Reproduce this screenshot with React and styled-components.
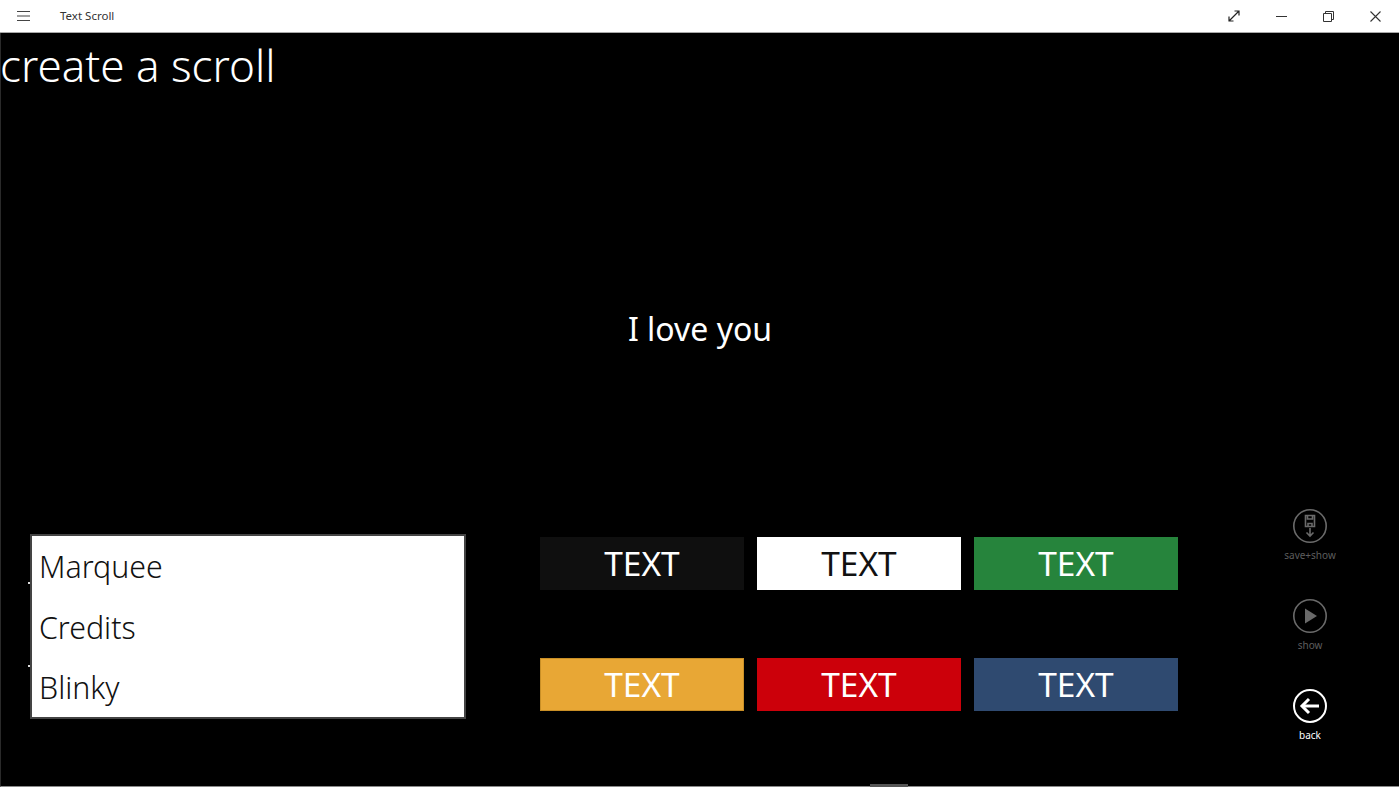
import React from "react";
import styled, { createGlobalStyle } from "styled-components";

const GlobalStyle = createGlobalStyle`
  html, body {
    margin: 0;
    padding: 0;
    height: 100%;
    background: #000;
    overflow: hidden;
  }
  body {
    font-family: "Noto Sans", "Open Sans", "Liberation Sans", sans-serif;
  }
`;

const Page = styled.div`
  position: relative;
  width: 1399px;
  height: 787px;
  display: flex;
  flex-direction: column;
`;

const TitleBar = styled.header`
  height: 32px;
  flex: none;
  display: flex;
  align-items: center;
  background: #fff;
  border-bottom: 1px solid #a9a9a9;
`;

const MenuButton = styled.button`
  width: 47px;
  height: 32px;
  padding: 0;
  border: 0;
  background: none;
  display: flex;
  align-items: center;
  justify-content: center;
`;

const AppName = styled.span`
  margin-left: 13px;
  padding-bottom: 1px;
  font-size: 11.5px;
  color: #333;
  flex: 1;
`;

const WindowButton = styled.button`
  width: 47px;
  height: 32px;
  padding: 0;
  border: 0;
  background: none;
  display: flex;
  align-items: center;
  justify-content: center;
`;

const Main = styled.main`
  flex: 1;
  min-height: 0;
  display: flex;
  flex-direction: column;
  background: #000;
  border-left: 1px solid #2a2a2a;
  border-bottom: 1px solid #8a8a8a;
`;

const Heading = styled.h1`
  margin: -1px 0 1px -1px;
  height: 67px;
  flex: none;
  font-size: 44px;
  line-height: 67px;
  font-weight: 300;
  color: #fff;
`;

const Preview = styled.div`
  flex: 1;
  min-height: 0;
  padding-top: 48px;
  display: flex;
  align-items: center;
  justify-content: center;
  font-size: 32px;
  font-weight: 400;
  color: #fff;
`;

const Bottom = styled.section`
  height: 278px;
  flex: none;
  display: flex;
  align-items: flex-start;
  padding-left: 29px;
`;

const ListBox = styled.ul`
  position: relative;
  box-sizing: border-box;
  width: 436px;
  height: 185px;
  margin: 26px 0 0;
  padding: 1px 0 0 7px;
  list-style: none;
  background: #fff;
  border: 2px solid #444;

  &::before,
  &::after {
    content: "";
    position: absolute;
    left: -4px;
    width: 2px;
    height: 2px;
    background: #ddd;
  }
  &::before {
    top: 46px;
  }
  &::after {
    top: 129px;
  }
`;

const ListItem = styled.li`
  height: 60.5px;
  font-size: 30.3px;
  line-height: 60px;
  font-weight: 300;
  color: #111;
`;

const Swatches = styled.div`
  margin: 29px 0 0 74px;
  display: grid;
  grid-template-columns: repeat(3, 204px);
  grid-auto-rows: 53px;
  column-gap: 13px;
  row-gap: 68px;
`;

const Swatch = styled.button`
  box-sizing: border-box;
  padding: 0;
  border: 1px solid ${(p) => p.$edge || p.$bg};
  background: ${(p) => p.$bg};
  color: ${(p) => p.$fg};
  font-family: inherit;
  font-size: 33.5px;
  font-weight: 400;
  line-height: 51px;
`;

const Actions = styled.nav`
  margin-left: 102px;
  display: flex;
  flex-direction: column;
  width: 60px;
`;

const Action = styled.button`
  height: 90px;
  padding: 0;
  border: 0;
  background: none;
  display: flex;
  flex-direction: column;
  align-items: center;
  font-family: inherit;
  font-size: 10px;
  line-height: 14px;
  color: ${(p) => (p.$dim ? "#5d5d5d" : "#fff")};
`;

const ActionIcon = styled.svg`
  width: 36px;
  height: 36px;
  margin-bottom: 4px;
  display: block;
`;

const ScrollThumb = styled.div`
  position: absolute;
  left: 870px;
  bottom: 0;
  width: 38px;
  height: 3px;
  background: #555;
`;

const swatches = [
  { bg: "#0f0f0f", fg: "#fff" },
  { bg: "#fff", fg: "#111" },
  { bg: "#26843c", fg: "#fff" },
  { bg: "#e8a735", fg: "#fff", edge: "#c98f26" },
  { bg: "#cc000a", fg: "#fff" },
  { bg: "#2f4a70", fg: "#fff" },
];

const App = () => {
  return (
    <Page>
      <GlobalStyle />
      <TitleBar>
        <MenuButton aria-label="menu">
          <svg width="13" height="12" viewBox="0 0 13 12" stroke="#444" strokeWidth="1.2">
            <path d="M0 1.5h13M0 6h13M0 10.5h13" />
          </svg>
        </MenuButton>
        <AppName>Text Scroll</AppName>
        <WindowButton aria-label="full screen">
          <svg width="12" height="12" viewBox="0 0 12 12" fill="none" stroke="#222" strokeWidth="1.2" style={{ marginLeft: -2 }}>
            <path d="M1 11 11 1M6.5 1H11V5.5M1 6.5V11H5.5" />
          </svg>
        </WindowButton>
        <WindowButton aria-label="minimize">
          <svg width="11" height="11" viewBox="0 0 11 11" stroke="#333" strokeWidth="1">
            <path d="M0 5.5h11" />
          </svg>
        </WindowButton>
        <WindowButton aria-label="restore">
          <svg width="11" height="11" viewBox="0 0 11 11" fill="none" stroke="#333" strokeWidth="1">
            <path d="M.5 2.5h8v8h-8zM2.5 2.5v-2h8v8h-2" />
          </svg>
        </WindowButton>
        <WindowButton aria-label="close">
          <svg width="11" height="11" viewBox="0 0 11 11" stroke="#333" strokeWidth="1.1">
            <path d="M.5.5l10 10M10.5.5l-10 10" />
          </svg>
        </WindowButton>
      </TitleBar>
      <Main>
        <Heading>create a scroll</Heading>
        <Preview>I love you</Preview>
        <Bottom>
          <ListBox>
            <ListItem>Marquee</ListItem>
            <ListItem>Credits</ListItem>
            <ListItem>Blinky</ListItem>
          </ListBox>
          <Swatches>
            {swatches.map((s, i) => (
              <Swatch key={i} $bg={s.bg} $fg={s.fg} $edge={s.edge}>
                TEXT
              </Swatch>
            ))}
          </Swatches>
          <Actions>
            <Action $dim>
              <ActionIcon viewBox="0 0 36 36" fill="none" stroke="#6a6a6a" strokeWidth="1.6">
                <circle cx="18" cy="18" r="16.2" />
                <path d="M13.5 7.5h9v11h-9zM15.5 7.5v3.5h5V7.5" />
                <path d="M16 18.5v-3h4v3" />
                <path d="M18 20v8M14.5 24.5l3.5 3.5 3.5-3.5" />
              </ActionIcon>
              save+show
            </Action>
            <Action $dim>
              <ActionIcon viewBox="0 0 36 36" fill="none" stroke="#6a6a6a" strokeWidth="1.6">
                <circle cx="18" cy="18" r="16.2" />
                <path d="M13 10.5 25 18l-12 7.5z" fill="#6a6a6a" stroke="none" />
              </ActionIcon>
              show
            </Action>
            <Action>
              <ActionIcon viewBox="0 0 36 36" fill="none" stroke="#fff" strokeWidth="2">
                <circle cx="18" cy="18" r="16" />
                <path d="M27 18H11" strokeWidth="3" />
                <path d="M17 11l-7 7 7 7" strokeWidth="3" />
              </ActionIcon>
              back
            </Action>
          </Actions>
        </Bottom>
      </Main>
      <ScrollThumb />
    </Page>
  );
};

export default App;
